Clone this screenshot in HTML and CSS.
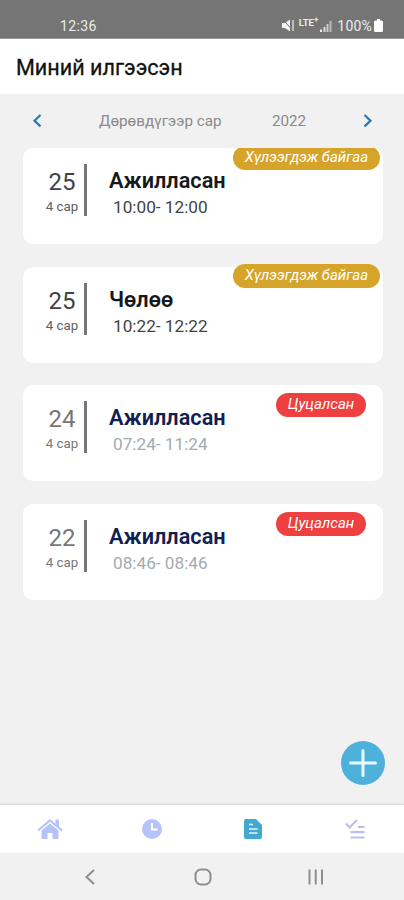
FILE: index.html
```
<!DOCTYPE html>
<html lang="mn">
<head>
<meta charset="utf-8">
<title>Миний илгээсэн</title>
<link rel="stylesheet" href="styles.css">
</head>
<body>
<div class="status">
  <span class="clock">12:36</span>
  <div class="indicators">
    <svg class="mute" width="13" height="13" viewBox="0 0 13 13"><path d="M0 4h3l5-3.500v12L3 9H0z" fill="#f2f2f2"/><path d="M1 .5l8 9" stroke="#757575" stroke-width="1"/><path d="M11 1v11" stroke="#e4e4e4" stroke-width="1.300"/></svg>
    <span class="lte">LTE<sup>+</sup></span>
    <svg class="signal" width="12" height="12" viewBox="0 0 12 12"><path d="M0 9.500h2V12H0z" fill="#eee"/><path d="M3.500 7h2v5h-2z" fill="#ddd"/><path d="M6.500 4h2v8h-2z" fill="#ccc"/><path d="M9.500 1h2v11h-2z" fill="#bbb"/></svg>
    <span class="percent">100%</span>
    <svg class="battery" width="9" height="13" viewBox="0 0 9 13"><path d="M3 0h3v1.500h1.500Q9 1.500 9 3v8.500Q9 13 7.500 13h-6Q0 13 0 11.500V3q0-1.500 1.500-1.500H3z" fill="#fff"/></svg>
  </div>
</div>
<header class="title-bar"><h1>Миний илгээсэн</h1></header>
<div class="period">
  <svg width="10" height="14" viewBox="0 0 10 14"><path d="M8.500 1L2.500 6.700l6 5.700" class="chevron"/></svg>
  <span class="month">Дөрөвдүгээр сар</span>
  <span class="year">2022</span>
  <svg width="10" height="14" viewBox="0 0 10 14"><path d="M1.500 1l6 5.700-6 5.700" class="chevron"/></svg>
</div>
<main class="list">
  <article class="card">
    <div class="date"><span class="day">25</span><span class="mon">4 сар</span></div>
    <div class="info"><h2>Ажилласан</h2><p>10:00- 12:00</p></div>
    <span class="badge pending">Хүлээгдэж байгаа</span>
  </article>
  <article class="card">
    <div class="date"><span class="day">25</span><span class="mon">4 сар</span></div>
    <div class="info"><h2>Чөлөө</h2><p>10:22- 12:22</p></div>
    <span class="badge pending">Хүлээгдэж байгаа</span>
  </article>
  <article class="card muted">
    <div class="date"><span class="day">24</span><span class="mon">4 сар</span></div>
    <div class="info"><h2>Ажилласан</h2><p>07:24- 11:24</p></div>
    <span class="badge cancelled">Цуцалсан</span>
  </article>
  <article class="card muted">
    <div class="date"><span class="day">22</span><span class="mon">4 сар</span></div>
    <div class="info"><h2>Ажилласан</h2><p>08:46- 08:46</p></div>
    <span class="badge cancelled">Цуцалсан</span>
  </article>
  <div class="add"><svg width="28" height="28" viewBox="0 0 28 28"><path d="M14 1.500v25M1.500 14h25" stroke="#e9f9ff" stroke-width="3" stroke-linecap="round"/></svg></div>
</main>
<nav class="tabs">
  <svg width="26" height="22" viewBox="0 0 26 22"><path d="M1 12.500L13 2.500l12 10" fill="none" stroke="#b4c4fa" stroke-width="2.200"/><path d="M18.500 1.500H22v8l-3.500-3z" fill="#b4c4fa"/><path d="M13 5.500l8.500 7V21h-6v-6h-5v6h-6v-8.500z" fill="#b4c4fa"/></svg>
  <svg width="20" height="20" viewBox="0 0 20 20"><circle cx="10" cy="10" r="10" fill="#b4c4fa"/><path d="M10 4v6.500h5.500" fill="none" stroke="#fff" stroke-width="1.900"/></svg>
  <svg width="18" height="20" viewBox="0 0 18 20"><path d="M2 0h10l6 6v12q0 2-2 2H2q-2 0-2-2V2q0-2 2-2z" fill="#43a9d0"/><path d="M5 5.500h4M5 10h8.500M5 14h8.500" stroke="#e2f5fb" stroke-width="1.500"/></svg>
  <svg width="20" height="20" viewBox="0 0 20 20"><path d="M.8 4.500l4 4 7-7.500" fill="none" stroke="#b9c0ee" stroke-width="2.200"/><path d="M13 8h6.500M5.500 13.200h14M5.500 18.500h14" stroke="#b9c0ee" stroke-width="2.200"/></svg>
</nav>
<footer class="system">
  <svg width="10" height="16" viewBox="0 0 10 16"><path d="M9 1L1.500 8 9 15" class="sys-line"/></svg>
  <svg width="18" height="18" viewBox="0 0 18 18"><rect x="1.500" y="1.500" width="15" height="15" rx="5.500" class="sys-line"/></svg>
  <svg width="16" height="16" viewBox="0 0 16 16"><path d="M1.500.5v15M7.700.5v15M14 .5v15" class="sys-line"/></svg>
</footer>
</body>
</html>
```
FILE: styles.css
```
* { box-sizing: border-box; }
body {
  margin: 0;
  width: 404px;
  height: 900px;
  display: flex;
  flex-direction: column;
  overflow: hidden;
  background: #f1f1f1;
  font-family: Roboto, "Liberation Sans", sans-serif;
}
h1, h2, p { margin: 0; }
.status {
  height: 39px;
  flex: none;
  background: #757575;
  color: #ececec;
  display: flex;
  justify-content: space-between;
  padding: 12px 21px 0 60px;
  border-bottom: 1px solid #999;
  font-size: 14px;
  line-height: 28px;
}
.clock { letter-spacing: .35px; }
.indicators { display: flex; align-items: center; height: 27px; }
.lte { font-size: 9.5px; font-weight: 700; line-height: 10px; margin: -6px 2px 0 4px; }
.lte sup { font-size: 8px; line-height: 0; }
.percent { margin: 0 2px 0 5px; letter-spacing: .2px; }
.title-bar { height: 55px; flex: none; background: #fff; padding: 0 16px; }
h1 { font-size: 21.6px; font-weight: 400; line-height: 58px; color: #111; -webkit-text-stroke: .3px #111; white-space: nowrap; }
.period {
  height: 54px;
  flex: none;
  display: grid;
  grid-template-columns: 67px 173px 91px 10px;
  align-items: center;
  padding-left: 32px;
  font-size: 15.2px;
  color: #8a8a8a;
}
.chevron { fill: none; stroke: #2378bd; stroke-width: 2.2; }
.list {
  flex: 1;
  position: relative;
  overflow: hidden;
  padding: 0 21px 0 23px;
  display: flex;
  flex-direction: column;
  gap: 22.7px;
}
.card {
  position: relative;
  flex: none;
  height: 96px;
  border-radius: 10px;
  background: #fff;
  display: flex;
  padding-top: 16px;
  color: #3f4346;
}
.date {
  width: 64px;
  height: 52px;
  border-right: 3px solid #777;
  padding-left: 17px;
  display: flex;
  flex-direction: column;
  align-items: center;
}
.day { font-size: 24px; line-height: 36px; }
.mon { font-size: 13.3px; line-height: 14px; white-space: nowrap; color: #606060; }
.info { padding-left: 22px; }
h2 { font-size: 21.7px; font-weight: 600; line-height: 34px; color: #15191c; white-space: nowrap; }
p { font-size: 17.2px; line-height: 18px; padding-left: 4px; white-space: nowrap; }
.muted .day { color: #777; }
.muted .mon { color: #777; }
.muted h2 { color: #102050; }
.muted p { color: #a2abb0; }
.badge {
  position: absolute;
  height: 24px;
  border-radius: 12px;
  color: #fff;
  font-size: 15px;
  font-style: italic;
  line-height: 23px;
  text-align: center;
  white-space: nowrap;
}
.pending { top: -2.5px; right: 3px; width: 147px; background: #d6a429; }
.cancelled { top: 7.5px; right: 17px; width: 90px; background: #ee4040; }
.add {
  position: absolute;
  right: 19px;
  bottom: 20px;
  width: 44px;
  height: 44px;
  border-radius: 50%;
  background: #4db1dc;
  display: flex;
  align-items: center;
  justify-content: center;
}
.tabs {
  height: 48px;
  flex: none;
  background: #fff;
  box-shadow: 0 -1px 2px rgba(0, 0, 0, .12);
  display: grid;
  grid-template-columns: repeat(4, 101.5px);
  justify-content: center;
  align-items: center;
  justify-items: center;
  padding-left: 1px;
}
.system {
  height: 47px;
  flex: none;
  display: grid;
  grid-template-columns: 113px 113px 113px;
  justify-content: center;
  justify-items: center;
  align-items: center;
  padding-left: 2px;
}
.sys-line { fill: none; stroke: #8e8e8e; stroke-width: 2; }
```
